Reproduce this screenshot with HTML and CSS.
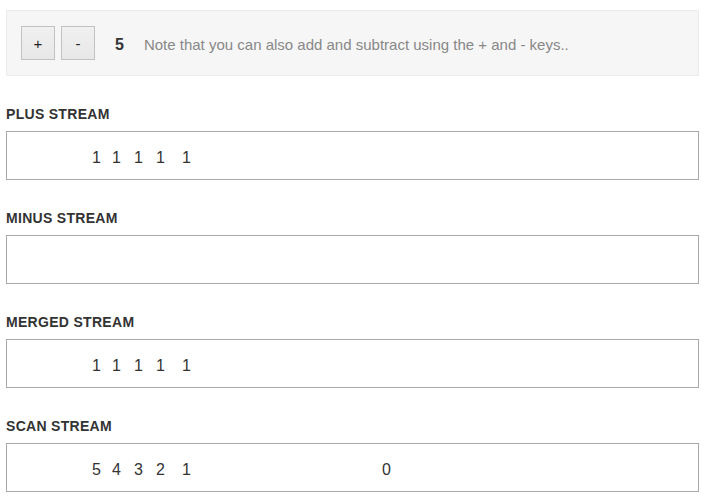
FILE: index.html
```html
<!DOCTYPE html>
<html>
<head>
<meta charset="utf-8">
<link rel="stylesheet" href="styles.css">
</head>
<body>
<div class="page">
  <div class="controls">
    <button class="btn">+</button>
    <button class="btn">-</button>
    <span class="count">5</span>
    <span class="note">Note that you can also add and subtract using the + and - keys..</span>
  </div>

  <section class="stream">
    <h3 class="label">PLUS STREAM</h3>
    <div class="track">
      <span class="marble" style="left:85px">1</span>
      <span class="marble" style="left:105px">1</span>
      <span class="marble" style="left:127px">1</span>
      <span class="marble" style="left:149px">1</span>
      <span class="marble" style="left:175px">1</span>
    </div>
  </section>

  <section class="stream">
    <h3 class="label">MINUS STREAM</h3>
    <div class="track"></div>
  </section>

  <section class="stream">
    <h3 class="label">MERGED STREAM</h3>
    <div class="track">
      <span class="marble" style="left:85px">1</span>
      <span class="marble" style="left:105px">1</span>
      <span class="marble" style="left:127px">1</span>
      <span class="marble" style="left:149px">1</span>
      <span class="marble" style="left:175px">1</span>
    </div>
  </section>

  <section class="stream">
    <h3 class="label">SCAN STREAM</h3>
    <div class="track">
      <span class="marble" style="left:85px">5</span>
      <span class="marble" style="left:105px">4</span>
      <span class="marble" style="left:127px">3</span>
      <span class="marble" style="left:149px">2</span>
      <span class="marble" style="left:175px">1</span>
      <span class="marble" style="left:375px">0</span>
    </div>
  </section>
</div>
</body>
</html>
```

FILE: styles.css
```css
* { box-sizing: border-box; }

html, body {
  margin: 0;
  padding: 0;
  background: #ffffff;
}

body {
  font-family: "Liberation Sans", Arial, Helvetica, sans-serif;
  color: #333333;
}

.page {
  padding: 10px 8px 0 6px;
}

.controls {
  display: flex;
  align-items: center;
  height: 66px;
  padding: 0 14px;
  background: #f6f6f6;
  border: 1px solid #ececec;
}

.btn {
  width: 34px;
  height: 34px;
  margin: 0 6px 0 0;
  padding: 0;
  background: linear-gradient(#f0f0f0, #e8e8e8);
  border: 1px solid #c2c2c2;
  border-radius: 0;
  font-family: "Liberation Sans", Arial, sans-serif;
  font-size: 15px;
  color: #222222;
}

.count {
  margin-left: 14px;
  padding-top: 3px;
  font-size: 16px;
  font-weight: bold;
  color: #333333;
}

.note {
  margin-left: 20px;
  padding-top: 3px;
  font-size: 15px;
  color: #888888;
}

.stream {
  margin-top: 30px;
}

.label {
  margin: 0 0 9px 0;
  font-size: 14px;
  line-height: 16px;
  font-weight: bold;
  letter-spacing: 0.3px;
  color: #333333;
}

.track {
  position: relative;
  height: 49px;
  border: 1px solid #a8a8a8;
  background: #ffffff;
}

.marble {
  position: absolute;
  top: 0;
  font-size: 16px;
  line-height: 51px;
  color: #333333;
}
```
